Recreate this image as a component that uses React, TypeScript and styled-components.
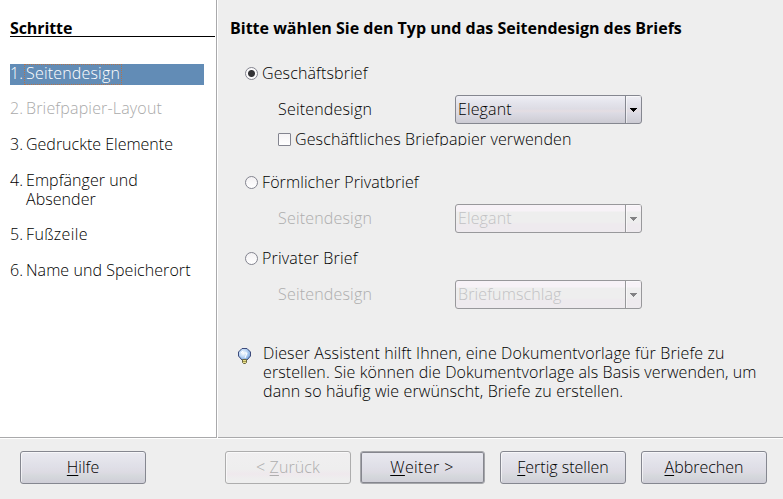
import React from "react";
import styled, { createGlobalStyle, css } from "styled-components";

const Global = createGlobalStyle`
  * { box-sizing: border-box; }
  body { margin: 0; background: #eeeeee; font: 300 16px/19px "Open Sans", "Noto Sans", sans-serif; color: #000; }
`;
const Window = styled.div`
  width: 783px; height: 499px; display: grid; overflow: hidden;
  grid-template: 439px 60px / 218px 565px; background: #eeeeee;
`;
const Sidebar = styled.nav`
  background: #fff; border-right: 1px solid #fff; border-bottom: 1px solid #fff;
  box-shadow: inset -1px -1px #a9a9ab; padding: 19px 0 0 10px;
`;
const Heading = styled.h1<{ $rule?: boolean }>`
  margin: 0; width: ${(p) => (p.$rule ? "205px" : "max-content")}; height: 18px;
  font-size: 16px; line-height: 19px; font-weight: 700; white-space: nowrap;
  letter-spacing: ${(p) => (p.$rule ? "-0.1px" : "0")};
  border-bottom: ${(p) => (p.$rule ? "1px solid #000" : "none")};
`;
const Steps = styled.ol`
  list-style: none; margin: 27px 0 0; padding: 0; width: 194px;
  display: flex; flex-direction: column; gap: 16px;
`;
const Step = styled.li<{ $state?: "active" | "disabled" }>`
  display: grid; grid-template-columns: 14px max-content; min-height: 20px; align-items: start;
  color: ${(p) => (p.$state === "disabled" ? "#aaa" : "#000")};
  ${(p) => p.$state === "active" && css`color: #fff; background: #628cb6; height: 21px; margin-bottom: -2px;`}
`;
const StepLabel = styled.span<{ $focus?: boolean; $track?: number }>`
  padding: 0 2px; white-space: pre; letter-spacing: ${(p) => p.$track ?? 0}px;
  ${(p) => p.$focus && css`height: 21px; padding: 0 1px; line-height: 17px; border: 1px dotted #b3734b;`}
`;
const Content = styled.main`
  padding: 19px 0 0 12px; border-bottom: 1px solid #fff; box-shadow: inset 0 -1px #a9a9ab;
`;
const Label = styled.span<{ $off?: boolean; $clip?: boolean; $track?: number }>`
  white-space: nowrap; color: ${(p) => (p.$off ? "#adadad" : "#000")};
  letter-spacing: ${(p) => p.$track ?? 0.13}px;
  ${(p) => p.$clip && css`height: 16px; overflow: hidden; align-self: flex-start;`}
`;
const Groups = styled.div`
  margin: 27px 0 0 15px; display: flex; flex-direction: column;
`;
const Option = styled.label<{ $indent?: boolean }>`
  display: flex; align-items: center; gap: 4px; height: 19px;
  ${(p) => p.$indent && css`margin: 0 0 24px 33px;`}
`;
const Radio = styled.span<{ $on?: boolean }>`
  width: 13px; height: 13px; border: 1px solid #83848f; border-radius: 50%;
  background: ${(p) => (p.$on ? "radial-gradient(circle, #333336 3px, #fbfafb 4px)" : "linear-gradient(#f3f1f3, #fff)")};
`;
const Check = styled.span`
  width: 13px; height: 13px; border: 1px solid #83848f; border-radius: 1px; background: linear-gradient(#f5f3f5, #fff);
`;
const Field = styled.div<{ $after: number }>`
  display: grid; grid-template-columns: 177px 187px; align-items: center;
  margin: 12px 0 ${(p) => p.$after}px 33px;
`;
const Combo = styled.div<{ $off?: boolean }>`
  height: 29px; display: grid; grid-template-columns: 1fr 16px; border-radius: 3px;
  border: 1px solid ${(p) => (p.$off ? "#98989b" : "#858790")};
  color: ${(p) => (p.$off ? "#c2c2c4" : "#000")};
  background: ${(p) => p.$off
    ? "linear-gradient(#f7f2f7 0 6px, #eeeeee 7px 17px, #eeeaee 19px)"
    : "linear-gradient(#f0f0f5 0, #e5e5ed 6px, #dddce4 13px, #e4dde2 15px, #dcdbe4 17px, #cccbd3 100%)"};
`;
const ComboText = styled.span`
  padding-left: 2px; line-height: 27px; letter-spacing: 0.12px;
`;
const Arrow = styled.span<{ $off?: boolean }>`
  border-left: 1px solid ${(p) => (p.$off ? "#98989b" : "#858790")};
  box-shadow: inset 1px 1px #ffffff88; display: grid; place-items: center;
  color: ${(p) => (p.$off ? "#828284" : "#000")};
`;
const Hint = styled.div`
  display: grid; grid-template-columns: 25px 500px; margin: 35px 0 0 8px;
`;
const Bulb = styled.svg`
  margin-top: 4px;
`;
const HintText = styled.p`
  margin: 0; display: flex; flex-direction: column; align-items: flex-start;
`;
const Footer = styled.footer`
  grid-column: 1 / 3; display: flex; align-items: flex-start; padding: 12px 0 0 20px;
`;
const Button = styled.button<{ $left?: number; $off?: boolean; $primary?: boolean; $track?: number }>`
  height: 33px; width: 126px; margin: 0 0 0 ${(p) => p.$left ?? 0}px; padding: 0 0 1px;
  font: inherit; border-radius: 3px; letter-spacing: ${(p) => p.$track ?? 0}px;
  border: 1px solid ${(p) => (p.$off ? "#adadad" : "#858790")};
  color: ${(p) => (p.$off ? "#adadad" : "#000")};
  background: ${(p) => p.$off
    ? "linear-gradient(#f0eff0, #eeeeee 17px, #efe9ed 22px, #eeeeee 27px)"
    : "linear-gradient(#e9e9f0, #dfdfe7 15px, #dddbe3 20px, #d5d8dc 24px, #cfced7)"};
  box-shadow: inset 1px 1px #ffffff99;
  ${(p) => p.$primary && css`width: 125px; padding-right: 1px; border-color: #a5a6aa; box-shadow: inset 0 0 0 1px #85868e;`}
`;
const Key = styled.span`
  text-decoration: underline; text-decoration-thickness: 1px; text-underline-offset: 2px;
`;

const Select = ({ text, off, after }: { text: string; off?: boolean; after: number }) => (
  <Field $after={after}>
    <Label $off={off} $track={0.18}>Seitendesign</Label>
    <Combo $off={off}>
      <ComboText>{text}</ComboText>
      <Arrow $off={off}>
        <svg width="7" height="4" shapeRendering="crispEdges">
          <path d="M0 0H7V1H6V2H5V3H4V4H3V3H2V2H1V1H0Z" fill="currentColor" />
        </svg>
      </Arrow>
    </Combo>
  </Field>
);

export default function App() {
  return (
    <Window>
      <Global />
      <Sidebar>
        <Heading $rule>Schritte</Heading>
        <Steps>
          <Step $state="active"><span>1.</span><StepLabel $focus $track={0.18}>Seitendesign</StepLabel></Step>
          <Step $state="disabled"><span>2.</span><StepLabel $track={0.17}>Briefpapier-Layout</StepLabel></Step>
          <Step><span>3.</span><StepLabel>Gedruckte Elemente</StepLabel></Step>
          <Step><span>4.</span><StepLabel $track={0.06}>{"Empfänger und\nAbsender"}</StepLabel></Step>
          <Step><span>5.</span><StepLabel $track={0.35}>Fußzeile</StepLabel></Step>
          <Step><span>6.</span><StepLabel $track={0.06}>Name und Speicherort</StepLabel></Step>
        </Steps>
      </Sidebar>
      <Content>
        <Heading>Bitte wählen Sie den Typ und das Seitendesign des Briefs</Heading>
        <Groups>
          <Option><Radio $on /><Label>Geschäftsbrief</Label></Option>
          <Select text="Elegant" after={6} />
          <Option $indent><Check /><Label $clip>Geschäftliches Briefpapier verwenden</Label></Option>
          <Option><Radio /><Label $track={0.1}>Förmlicher Privatbrief</Label></Option>
          <Select text="Elegant" off after={16} />
          <Option><Radio /><Label $track={0.2}>Privater Brief</Label></Option>
          <Select text="Briefumschlag" off after={0} />
        </Groups>
        <Hint>
          <Bulb width="13" height="17" viewBox="0 0 13 17">
            <defs>
              <radialGradient id="glass" cx="40%" cy="40%" r="60%">
                <stop offset="0" stopColor="#ffffff" />
                <stop offset="0.5" stopColor="#c3dbf6" />
                <stop offset="1" stopColor="#7ea9e0" />
              </radialGradient>
            </defs>
            <path d="M4 .5H9L12.5 4V8L9 12H4L.5 8V4Z" fill="url(#glass)" stroke="#3c4a7a" />
            <path d="M7 10 9 5 7 5M3 5 5 3" fill="none" stroke="#fff" />
            <path d="M4.5 11.5H8.5V14.5L7.5 15.5H5.5L4.5 14.5Z" fill="#e9e08a" stroke="#6b6742" />
            <path d="M5 13.5H8" stroke="#a59c50" />
          </Bulb>
          <HintText>
            <Label>Dieser Assistent hilft Ihnen, eine Dokumentvorlage für Briefe zu</Label>
            <Label $track={0.09}>erstellen. Sie können die Dokumentvorlage als Basis verwenden, um</Label>
            <Label $track={0.11}>dann so häufig wie erwünscht, Briefe zu erstellen.</Label>
          </HintText>
        </Hint>
      </Content>
      <Footer>
        <Button><Key>H</Key>ilfe</Button>
        <Button $off $left={79} $track={0.1}>&lt; <Key>Z</Key>urück</Button>
        <Button $primary $left={9} $track={0.4}><Key>W</Key>eiter &gt;</Button>
        <Button $left={15}><Key>F</Key>ertig stellen</Button>
        <Button $left={15}><Key>A</Key>bbrechen</Button>
      </Footer>
    </Window>
  );
}
